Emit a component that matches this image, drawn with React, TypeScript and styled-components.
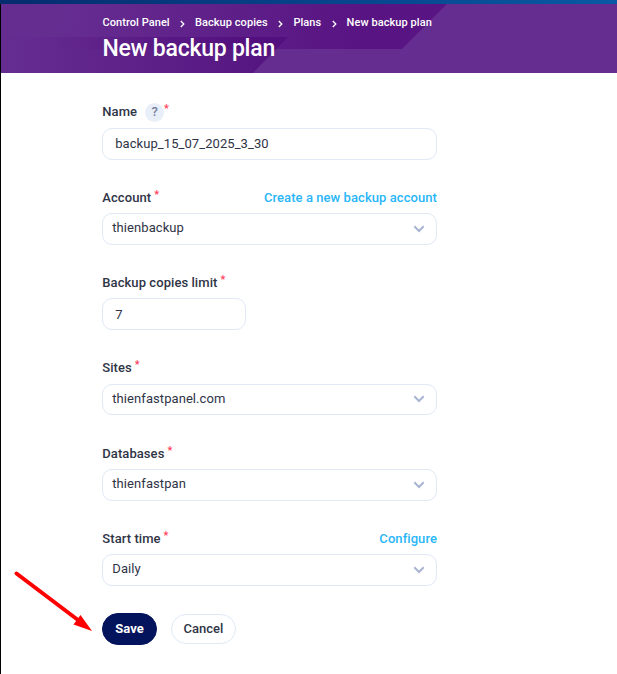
import React from "react";
import styled, { createGlobalStyle } from "styled-components";

const GlobalStyle = createGlobalStyle`
  *, *::before, *::after { box-sizing: border-box; }
  body { margin: 0; background: #fff; }
  button, input { font: inherit; letter-spacing: inherit; }
`;

const Page = styled.div`
  height: 674px;
  overflow: hidden;
  position: relative;
  display: flex;
  flex-direction: column;
  background: #fff;
  color: #2f3446;
  font: 400 13px/16px Roboto, sans-serif;
`;

const TopStrip = styled.div`
  flex: none;
  height: 4px;
  background: linear-gradient(90deg, #052c6e, #0959a4);
`;

const Frame = styled.div`
  flex: 1;
  border-left: 1px solid #000;
`;

const Header = styled.header`
  position: relative;
  height: 69px;
  padding: 11px 0 0 101.4px;
  background: #662d91;
  color: #fff;
`;

const HeaderArt = styled.svg`
  position: absolute;
  inset: 0;
`;

const Crumbs = styled.nav`
  position: relative;
  display: flex;
  align-items: center;
  height: 16px;
  font-size: 11px;
  font-weight: 500;
  letter-spacing: 0.07px;
`;

const CrumbArrow = styled.svg`
  margin: 1px 10px 0;
`;

const Crumb = styled.span<{ $w: number }>`
  width: ${(p) => p.$w}px;
  white-space: nowrap;
`;

const Title = styled.h1`
  position: relative;
  margin: 4px 0 0;
  font-size: 23px;
  line-height: 28px;
  font-weight: 500;
  letter-spacing: -0.24px;
`;

const Form = styled.form`
  width: 335px;
  margin-left: 101px;
  padding-top: 29.3px;
`;

const Field = styled.div`
  display: flow-root;
  height: 85.25px;
`;

const LabelRow = styled.div<{ $raised?: boolean }>`
  display: flex;
  align-items: center;
  height: 20px;
  margin-top: ${(p) => (p.$raised ? -0.8 : 0)}px;
  margin-bottom: ${(p) => (p.$raised ? 6.3 : 5.5)}px;
  padding: 0.6px 0 0 0.3px;
  font-weight: 500;
`;

const Label = styled.label`
  letter-spacing: 0.07px;
`;

const Help = styled.span`
  display: grid;
  place-items: center;
  width: 19px;
  height: 19px;
  margin: 1px -3px 0 8px;
  border-radius: 50%;
  background: #e9eff8;
  color: #747e9b;
`;

const Star = styled.span<{ $lowered?: boolean }>`
  margin: ${(p) => (p.$lowered ? -5.6 : -6)}px 0 0 3px;
  color: #ff3b57;
  font-size: 11px;
  font-weight: 500;
`;

const Link = styled.a`
  margin-left: auto;
  color: #29b6f9;
  letter-spacing: 0.07px;
`;

const Box = styled.div<{ $input?: boolean; $narrow?: boolean }>`
  display: flex;
  align-items: center;
  justify-content: space-between;
  width: ${(p) => (p.$narrow ? "144px" : "100%")};
  height: 31.9px;
  padding: 0 11px 0 ${(p) => (p.$input ? 12.2 : 9.3)}px;
  border: 1px solid #e0e9f5;
  border-radius: 10px;
  letter-spacing: 0.07px;
`;

const TextInput = styled.input`
  width: 100%;
  border: 0;
  padding: 0.6px 0 0;
  outline: 0;
  background: none;
  color: inherit;
`;

const Value = styled.span`
  margin-top: -1.6px;
`;

const Actions = styled.div`
  display: flex;
  align-items: center;
  gap: 14px;
  margin-top: -0.8px;
`;

const Button = styled.button<{ $primary?: boolean }>`
  width: ${(p) => (p.$primary ? 55 : 65)}px;
  height: ${(p) => (p.$primary ? 32 : 30)}px;
  padding: 0;
  border: 1px solid ${(p) => (p.$primary ? "#04145c" : "#e0e9f5")};
  border-radius: 16px;
  background: ${(p) => (p.$primary ? "#04145c" : "#fff")};
  color: ${(p) => (p.$primary ? "#fff" : "#2f3446")};
  font-weight: ${(p) => (p.$primary ? 700 : 500)};
`;

const Pointer = styled.svg`
  position: absolute;
  left: 0;
  top: 560px;
  pointer-events: none;
`;

const Chevron = () => (
  <svg width="12" height="8" viewBox="0 0 12 8" fill="none" stroke="#a9b4d1" strokeWidth="2">
    <path d="M1.3 1.3 6 6l4.7-4.7" />
  </svg>
);

const crumbs = [
  { text: "Control Panel", width: 67.5 },
  { text: "Backup copies", width: 73.5 },
  { text: "Plans", width: 28.2 },
  { text: "New backup plan", width: 88 },
];

type FieldProps = {
  label: string;
  value: string;
  link?: string;
  help?: boolean;
  input?: boolean;
  narrow?: boolean;
};

const fields: FieldProps[] = [
  { label: "Name", value: "backup_15_07_2025_3_30", help: true, input: true },
  { label: "Account", value: "thienbackup", link: "Create a new backup account" },
  { label: "Backup copies limit", value: "7", input: true, narrow: true },
  { label: "Sites", value: "thienfastpanel.com" },
  { label: "Databases", value: "thienfastpan" },
  { label: "Start time", value: "Daily", link: "Configure" },
];

const FormField = ({ label, value, link, help, input, narrow }: FieldProps) => (
  <Field>
    <LabelRow $raised={help}>
      <Label>{label}</Label>
      {help && <Help>?</Help>}
      <Star $lowered={help}>*</Star>
      {link && <Link>{link}</Link>}
    </LabelRow>
    <Box $input={input} $narrow={narrow}>
      {input ? (
        <TextInput defaultValue={value} aria-label={label} />
      ) : (
        <>
          <Value>{value}</Value>
          <Chevron />
        </>
      )}
    </Box>
  </Field>
);

export default function App() {
  return (
    <Page>
      <GlobalStyle />
      <TopStrip />
      <Frame>
        <Header>
          <HeaderArt width="616" height="69" viewBox="0 0 616 69">
            <defs>
              <linearGradient id="upper" gradientUnits="userSpaceOnUse" x1="60" y1="0" x2="350" y2="60">
                <stop offset="0" stopColor="#561080" stopOpacity="0" />
                <stop offset="1" stopColor="#561080" stopOpacity="0.85" />
              </linearGradient>
              <linearGradient id="lower" gradientUnits="userSpaceOnUse" x1="0" y1="0" x2="270" y2="0">
                <stop offset="0" stopColor="#4c0878" stopOpacity="0" />
                <stop offset="1" stopColor="#4c0878" stopOpacity="0.65" />
              </linearGradient>
            </defs>
            <path d="M0 0H446L401 45H0Z" fill="url(#upper)" />
            <path d="M0 33H287L252 69H0Z" fill="url(#lower)" />
          </HeaderArt>
          <Crumbs>
            {crumbs.map((c, i) => (
              <React.Fragment key={c.text}>
                {i > 0 && (
                  <CrumbArrow width="5" height="8" viewBox="0 0 5 8" fill="none" stroke="#fff" strokeWidth="1.3">
                    <path d="m.8 1 3 3-3 3" />
                  </CrumbArrow>
                )}
                <Crumb $w={c.width}>{c.text}</Crumb>
              </React.Fragment>
            ))}
          </Crumbs>
          <Title>New backup plan</Title>
        </Header>
        <Form>
          {fields.map((f) => (
            <FormField key={f.label} {...f} />
          ))}
          <Actions>
            <Button type="button" $primary>Save</Button>
            <Button type="button">Cancel</Button>
          </Actions>
        </Form>
      </Frame>
      <Pointer width="100" height="80" viewBox="0 0 100 80">
        <path d="M16.5 13.5 78 60" stroke="#f00" strokeWidth="4" strokeLinecap="round" />
        <path d="m92 71-11.5-16-7 9.5Z" fill="#f00" />
      </Pointer>
    </Page>
  );
}
